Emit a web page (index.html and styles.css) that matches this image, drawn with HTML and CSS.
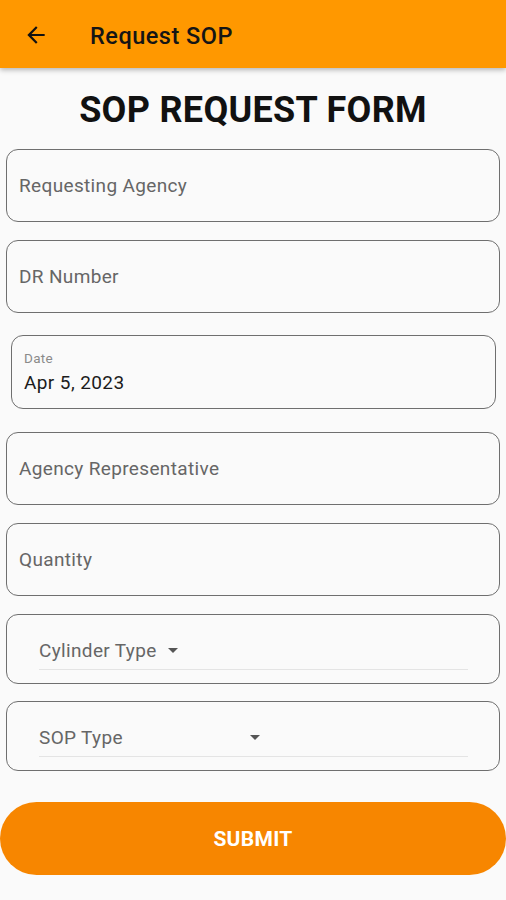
FILE: index.html
```html
<!DOCTYPE html>
<html lang="en">
<head>
    <meta charset="UTF-8">
    <meta name="viewport" content="width=device-width, initial-scale=1.0">
    <link rel="stylesheet" href="styles.css">
    <title>Request SOP</title>
</head>
<body>
    <header class="appbar">
        <button class="back-btn" aria-label="Back">
            <svg viewBox="0 0 24 24" width="24" height="24"><path d="M20 11H7.83l5.59-5.59L12 4l-8 8 8 8 1.41-1.41L7.83 13H20v-2z" fill="#111"/></svg>
        </button>
        <span class="appbar-title">Request SOP</span>
    </header>

    <main class="form">
        <h1 class="form-title">SOP REQUEST FORM</h1>

        <div class="field"><span class="hint">Requesting Agency</span></div>
        <div class="field"><span class="hint">DR Number</span></div>

        <div class="field date-field">
            <span class="small-label">Date</span>
            <span class="value">Apr 5, 2023</span>
        </div>

        <div class="field"><span class="hint">Agency Representative</span></div>
        <div class="field"><span class="hint">Quantity</span></div>

        <div class="field select-field">
            <div class="select">
                <div class="select-btn">
                    <span class="hint">Cylinder Type</span>
                    <span class="caret"></span>
                </div>
            </div>
        </div>

        <div class="field select-field">
            <div class="select">
                <div class="select-btn wide">
                    <span class="hint">SOP Type</span>
                    <span class="caret"></span>
                </div>
            </div>
        </div>

        <button class="submit">SUBMIT</button>
    </main>
</body>
</html>
```

FILE: styles.css
```css
* {
    box-sizing: border-box;
}

body {
    margin: 0;
    background: #fafafa;
    font-family: Roboto, "Noto Sans", sans-serif;
    width: 506px;
    height: 900px;
    overflow: hidden;
}

.appbar {
    height: 68px;
    background: #ff9800;
    display: flex;
    align-items: center;
    padding-left: 23px;
    box-shadow: 0 2px 5px rgba(0, 0, 0, 0.28);
    position: relative;
}

.back-btn {
    border: none;
    background: none;
    padding: 0;
    width: 26px;
    height: 26px;
    display: flex;
    margin-top: 2px;
}

.back-btn svg {
    width: 26px;
    height: 26px;
}

.appbar-title {
    margin-left: 41px;
    font-size: 23.5px;
    font-weight: 500;
    letter-spacing: 0.5px;
    color: #151515;
    margin-top: 3px;
}

.form {
    display: flex;
    flex-direction: column;
    gap: 18px;
    padding: 0 6px;
}

.form-title {
    margin: 0 0 -17px;
    height: 80px;
    line-height: 84px;
    text-align: center;
    font-size: 36px;
    font-weight: 700;
    letter-spacing: 0.3px;
    color: #111;
}

.field {
    height: 73px;
    border: 1.5px solid #6f6f6f;
    border-radius: 12px;
    display: flex;
    align-items: center;
    padding-left: 12px;
}

.hint {
    font-size: 19px;
    letter-spacing: 0.35px;
    color: #666;
}

.date-field {
    margin: 4px 4px 5px 5px;
    height: 74px;
    flex-direction: column;
    align-items: flex-start;
    justify-content: center;
    padding-left: 12px;
    padding-bottom: 2px;
}

.small-label {
    font-size: 13.5px;
    letter-spacing: 0.3px;
    color: #8a8a8a;
    line-height: 16px;
}

.value {
    font-size: 19px;
    letter-spacing: 0.4px;
    color: #1c1c1c;
    margin-top: 5px;
    margin-bottom: -3px;
    line-height: 24px;
}

.select-field {
    height: 70px;
    padding: 0 31px 0 32px;
}

.select-field + .select-field {
    margin-top: -1px;
}

.select {
    flex: 1;
    border-bottom: 1px solid #e4e4e4;
    padding-top: 8px;
    height: 41px;
}

.select-btn {
    display: inline-flex;
    align-items: center;
    gap: 11px;
    height: 28px;
}

.select-btn.wide {
    width: 226px;
    justify-content: space-between;
    gap: 0;
    padding-right: 5px;
}

.caret {
    width: 0;
    height: 0;
    border-left: 5px solid transparent;
    border-right: 5px solid transparent;
    border-top: 5px solid #555;
}

.submit {
    margin: 13px -6px 0;
    height: 73px;
    border: none;
    border-radius: 37px;
    background: #f78600;
    color: #fff;
    font-family: Roboto, "Noto Sans", sans-serif;
    font-size: 21px;
    font-weight: 700;
    letter-spacing: 0.3px;
}
```
